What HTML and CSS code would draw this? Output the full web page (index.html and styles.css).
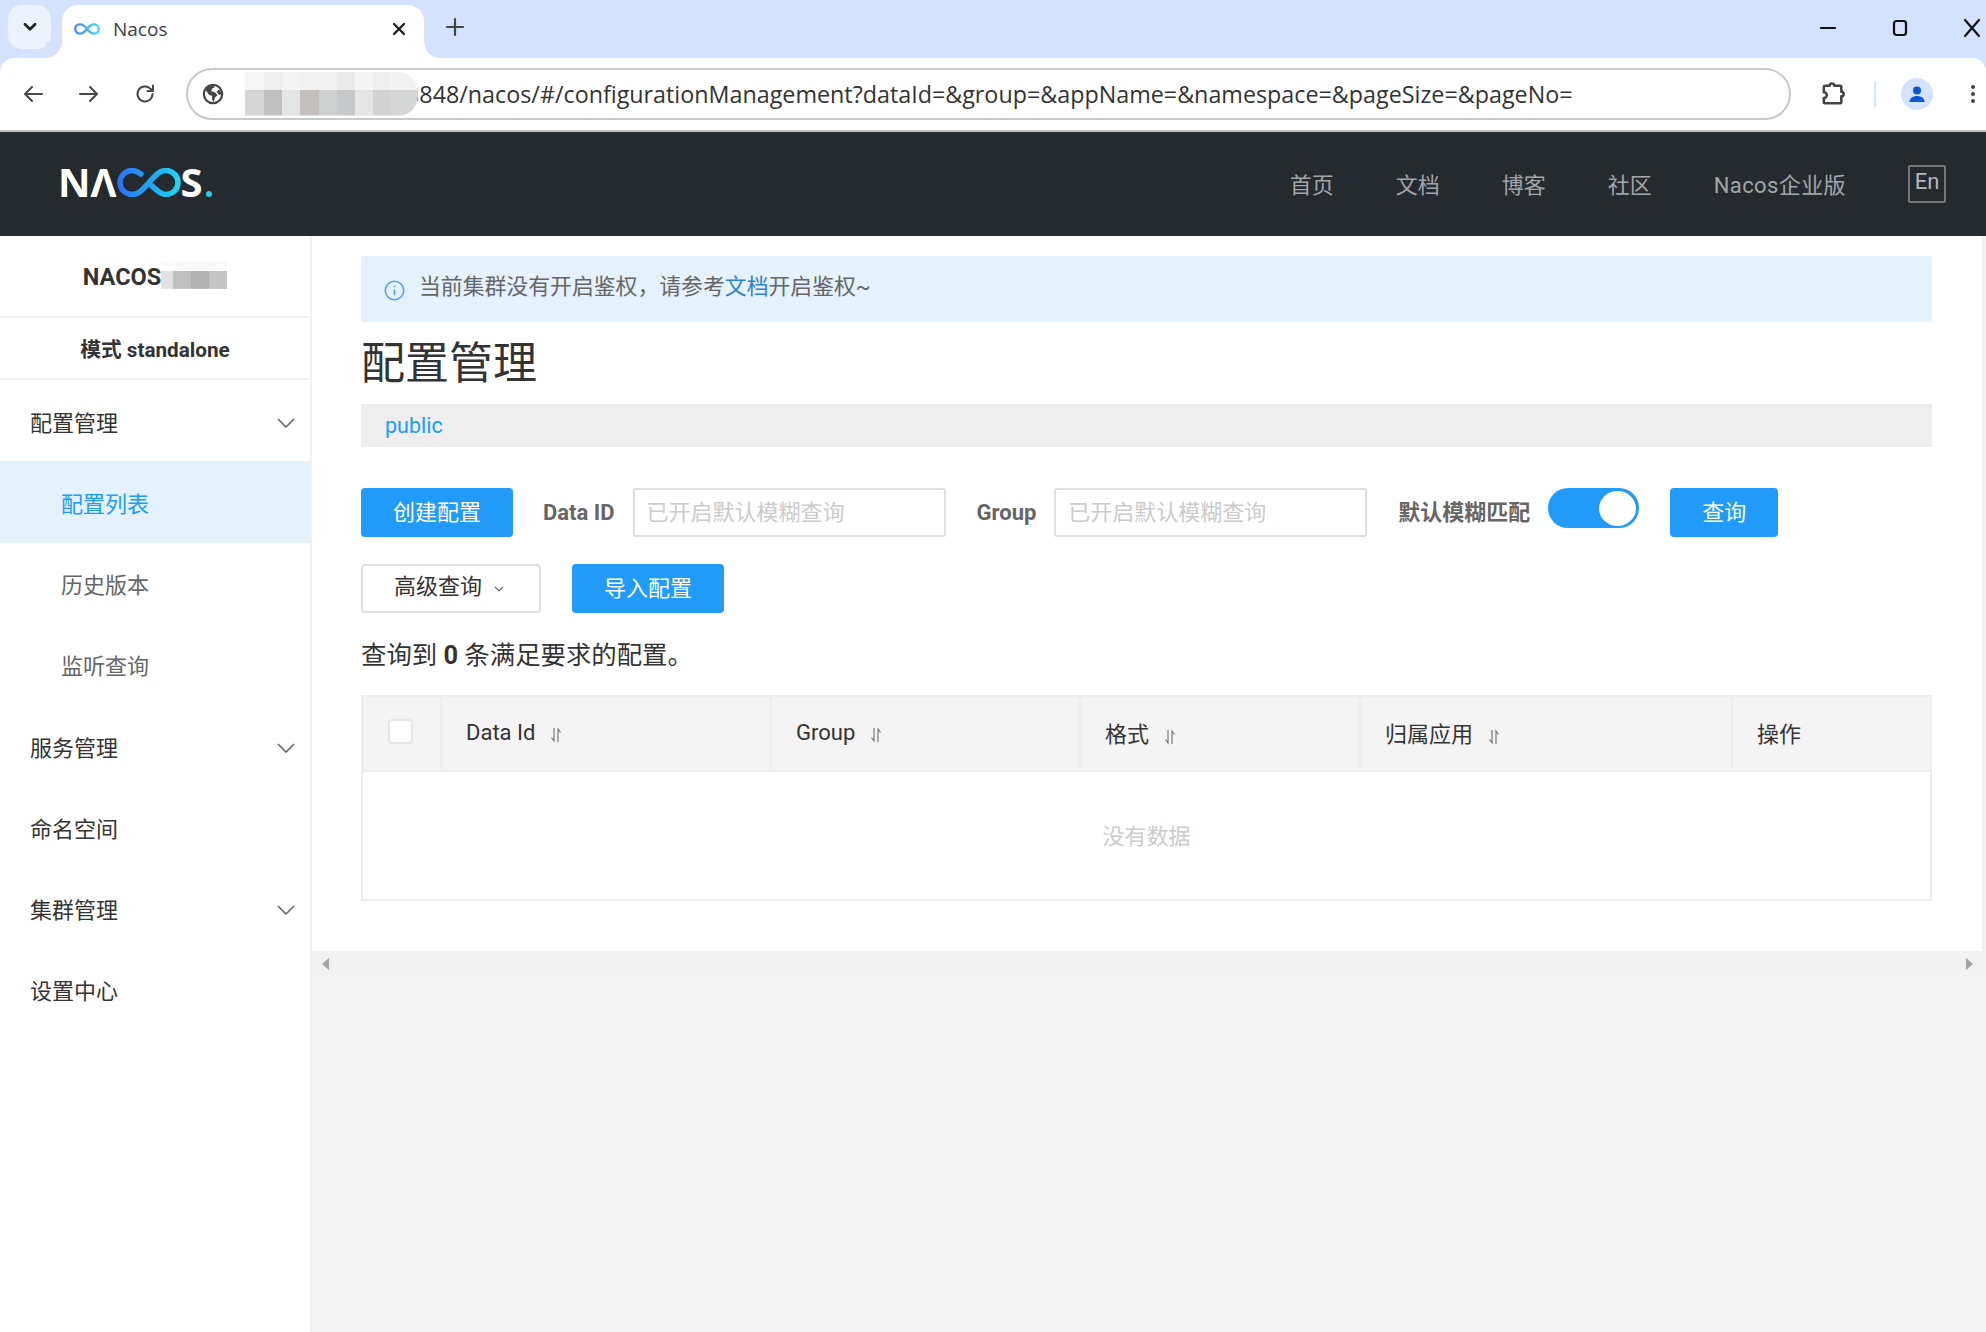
FILE: index.html
```html
<!DOCTYPE html>
<html lang="zh-CN">
<head>
<meta charset="utf-8">
<title>Nacos</title>
<link rel="stylesheet" href="styles.css">
</head>
<body>
<svg class="defs" aria-hidden="true"><defs>
  <linearGradient id="inf" x1="0" x2="1" y1="0" y2="0"><stop offset="0" stop-color="#2a74f5"/><stop offset=".55" stop-color="#1fa8f5"/><stop offset="1" stop-color="#1fd6f2"/></linearGradient>
</defs></svg>

<header class="tabstrip">
  <div class="tablist-btn"><svg class="ic16" viewBox="0 0 16 16"><path d="M3.5 5.5 8 10l4.5-4.5" class="st-dark2"/></svg></div>
  <div class="tab">
    <svg class="favicon" viewBox="0 0 62 30"><path class="inf-stroke-fav" d="M31 15C25 7 20 4 14 4 7 4 3 9 3 15s4 11 11 11c6 0 11-3 17-11s11-11 17-11c7 0 11 5 11 11s-4 11-11 11c-6 0-11-3-17-11z"/></svg>
    <span class="tab-title">Nacos</span>
    <svg class="tab-close" viewBox="0 0 16 16"><path d="M3 3l10 10M13 3 3 13" class="st-dark2"/></svg>
  </div>
  <svg class="tab-plus" viewBox="0 0 24 24"><path d="M12 4v16M4 12h16" class="st-dark"/></svg>
  <div class="win-ctrl">
    <svg class="ic24" viewBox="0 0 24 24"><path d="M5 12h14" class="st-black"/></svg>
    <svg class="ic24" viewBox="0 0 24 24"><rect x="6" y="5" width="12" height="14" rx="2.5" class="st-black"/></svg>
    <svg class="ic24" viewBox="0 0 24 24"><path d="M5 4l14 16M19 4 5 20" class="st-black"/></svg>
  </div>
</header>

<div class="toolbar">
  <svg class="ic24 tb-first" viewBox="0 0 24 24"><path d="M21 12H4M11 5l-7 7 7 7" class="st-gray"/></svg>
  <svg class="ic24 tb-next" viewBox="0 0 24 24"><path d="M3 12h17M13 5l7 7-7 7" class="st-gray"/></svg>
  <svg class="ic24 tb-next" viewBox="0 0 24 24"><path d="M19.5 12a7.5 7.5 0 1 1-2.3-5.4L20 9M20 3.5V9h-5.5" class="st-gray"/></svg>
  <div class="omnibox">
    <svg class="globe" viewBox="0 0 24 24"><circle cx="12" cy="12" r="10" class="globe-ring"/><path class="globe-land" d="M12 3c-4 0-7 2-8 5l4 5 3 1v4l2 3 1-5 3-3-3-3-4-1 1-3 3-1zM18 7l-2 3 3 3 2-1c0-2-1-4-3-5z"/></svg>
    <span class="url">8848/nacos/#/configurationManagement?dataId=&amp;group=&amp;appName=&amp;namespace=&amp;pageSize=&amp;pageNo=</span>
    <div class="url-mosaic" aria-hidden="true"></div>
  </div>
  <svg class="ext" viewBox="0 0 24 24"><path class="st-dark-ext" d="M6 5h4a2 2 0 0 1 4 0h5a1 1 0 0 1 1 1v4a2 2 0 0 1 0 4v5a1 1 0 0 1-1 1H6a1 1 0 0 1-1-1v-3.500a2.500 2.500 0 0 0 0-5V6a1 1 0 0 1 1-1z"/></svg>
  <div class="tb-div"></div>
  <div class="avatar"><svg viewBox="0 0 24 24"><circle cx="12" cy="8.500" r="4"/><path d="M4.500 20c0-4 3.500-6 7.500-6s7.500 2 7.500 6z"/></svg></div>
  <svg class="dots" viewBox="0 0 24 24"><circle cx="12" cy="5" r="2"/><circle cx="12" cy="12" r="2"/><circle cx="12" cy="19" r="2"/></svg>
</div>

<div class="app-header">
  <div class="logo">
    <span class="logo-t">N&#923;</span>
    <svg class="logo-inf" viewBox="0 0 64 29"><path class="inf-stroke" d="M24 6C21 4 18 2.500 15 2.500 8 2.500 3 8 3 14.500S8 26.500 15 26.500C22 26.500 26 21 32 14.500 38 8 42 2.500 49 2.500 56 2.500 61 8 61 14.500S56 26.500 49 26.500C44 26.500 40 23 35 18"/></svg>
    <span class="logo-t">S</span><span class="logo-dot"></span>
  </div>
  <nav class="top-nav">
    <a>首页</a><a>文档</a><a>博客</a><a>社区</a><a class="nav-wide">Nacos企业版</a>
    <span class="lang">En</span>
  </nav>
</div>

<div class="shell">
  <aside class="sidebar">
    <div class="side-brand"><span>NACOS</span><i class="brand-mosaic"></i></div>
    <div class="side-mode">模式 standalone</div>
    <ul class="menu">
      <li class="m-item">配置管理<svg class="chev" viewBox="0 0 18 10"><path d="M1 1l8 8 8-8"/></svg></li>
      <li class="m-item sub active">配置列表</li>
      <li class="m-item sub">历史版本</li>
      <li class="m-item sub">监听查询</li>
      <li class="m-item">服务管理<svg class="chev" viewBox="0 0 18 10"><path d="M1 1l8 8 8-8"/></svg></li>
      <li class="m-item">命名空间</li>
      <li class="m-item">集群管理<svg class="chev" viewBox="0 0 18 10"><path d="M1 1l8 8 8-8"/></svg></li>
      <li class="m-item">设置中心</li>
    </ul>
  </aside>

  <main class="main">
    <div class="pane">
      <div class="content">
        <div class="notice">
          <svg class="notice-ic" viewBox="0 0 20 20"><circle cx="10" cy="10" r="8.800"/><path d="M10 9v5.500M10 5.500v1.500"/></svg>
          <span class="notice-text">当前集群没有开启鉴权，请参考<a class="notice-link">文档</a>开启鉴权~</span>
        </div>
        <h1 class="title">配置管理</h1>
        <div class="ns-bar"><a>public</a></div>

        <div class="form-row">
          <button class="btn primary first">创建配置</button>
          <label class="f-item"><span class="f-label">Data ID</span><span class="f-input">已开启默认模糊查询</span></label>
          <label class="f-item"><span class="f-label">Group</span><span class="f-input">已开启默认模糊查询</span></label>
          <div class="f-item"><span class="f-label">默认模糊匹配</span><span class="switch"><i></i></span></div>
          <button class="btn primary query">查询</button>
        </div>
        <div class="form-row second">
          <button class="btn ghost">高级查询<svg class="mini-chev" viewBox="0 0 10 6"><path d="M1 1l4 4 4-4"/></svg></button>
          <button class="btn primary">导入配置</button>
        </div>

        <p class="count">查询到 <b>0</b> 条满足要求的配置。</p>

        <table class="grid">
          <colgroup><col class="c0"><col class="c1"><col class="c2"><col class="c3"><col class="c4"><col class="c5"></colgroup>
          <thead>
            <tr>
              <th class="chk-cell"><span class="chk"></span></th>
              <th>Data Id<svg class="sort" viewBox="0 0 12 16"><path d="M4 1v13L1.500 10.500M8 15V2l2.500 3.500"/></svg></th>
              <th>Group<svg class="sort" viewBox="0 0 12 16"><path d="M4 1v13L1.500 10.500M8 15V2l2.500 3.500"/></svg></th>
              <th>格式<svg class="sort" viewBox="0 0 12 16"><path d="M4 1v13L1.500 10.500M8 15V2l2.500 3.500"/></svg></th>
              <th>归属应用<svg class="sort" viewBox="0 0 12 16"><path d="M4 1v13L1.500 10.500M8 15V2l2.500 3.500"/></svg></th>
              <th>操作</th>
            </tr>
          </thead>
          <tbody><tr><td colspan="6" class="empty">没有数据</td></tr></tbody>
        </table>
      </div>
      <div class="vbar"></div>
    </div>
    <div class="hbar"><i class="arr-l"></i><i class="arr-r"></i></div>
  </main>
</div>
</body>
</html>
```
FILE: styles.css
```css
* { box-sizing: border-box; }
html, body { margin: 0; padding: 0; height: 100%; overflow: hidden; }
body { width: 1986px; height: 1332px; display: flex; flex-direction: column; background: #d3e3fd; font-family: Roboto, "Noto Sans CJK SC", sans-serif; font-size: 22px; color: #333; }
.defs { position: absolute; width: 0; height: 0; }
button { font: inherit; }

/* browser chrome */
.tabstrip { height: 58px; flex: none; background: #d3e3fd; display: flex; align-items: flex-start; padding: 5px 2px 0 8px; }
.tablist-btn { width: 43px; height: 44px; border-radius: 14px; background: #ecf2fe; display: flex; align-items: center; justify-content: center; }
.ic16 { width: 18px; height: 18px; }
.ic24 { width: 24px; height: 24px; flex: none; }
.tab { position: relative; margin-left: 11px; width: 362px; height: 53px; background: #fff; border-radius: 16px 16px 0 0; display: flex; align-items: center; padding: 0 17px 6px 12px; }
.tab::before, .tab::after { content: ""; position: absolute; bottom: 0; width: 16px; height: 16px; }
.tab::before { left: -16px; background: radial-gradient(circle at 0 0, #d3e3fd 15.500px, #fff 16px); }
.tab::after { right: -16px; background: radial-gradient(circle at 100% 0, #d3e3fd 15.500px, #fff 16px); }
.favicon { width: 26px; height: 14px; opacity: .85; }
.tab-title { margin-left: 13px; font-family: "Open Sans", "Noto Sans", sans-serif; font-size: 19px; color: #3c4043; }
.tab-close { width: 16px; height: 16px; margin-left: auto; }
.tab-plus { width: 24px; height: 24px; margin: 10px 0 0 19px; }
.win-ctrl { margin-left: auto; display: flex; gap: 48px; margin-top: 11px; }
.st-dark, .st-dark2, .st-black, .st-gray, .st-dark-ext { fill: none; stroke-linecap: round; stroke-linejoin: round; }
.st-dark { stroke: #444; stroke-width: 2.2; }
.st-dark2 { stroke: #222; stroke-width: 2.4; }
.st-black { stroke: #111; stroke-width: 2.2; }
.st-gray { stroke: #474747; stroke-width: 2; }
.st-dark-ext { stroke: #444; stroke-width: 2.2; }

.toolbar { height: 74px; flex: none; background: #fff; border-bottom: 2px solid #bdbdbd; display: flex; align-items: center; padding-left: 21px; border-radius: 14px 14px 0 0; position: relative; }
.tb-next { margin-left: 32px; }
.omnibox { position: relative; margin-left: 29px; width: 1605px; height: 52px; border: 2px solid #c8c9c9; border-radius: 26px; background: #fff; display: flex; align-items: center; padding-left: 14px; flex: none; }
.globe { width: 22px; height: 22px; flex: none; }
.globe-ring { fill: #fff; stroke: #444; stroke-width: 2.4; }
.globe-land { fill: #444; }
.url { margin-left: 182px; white-space: nowrap; font-family: "Open Sans", "Noto Sans", sans-serif; font-size: 23.300px; color: #333; }
.url-mosaic { position: absolute; left: 57px; top: 2px; width: 173px; height: 44px; border-radius: 0 20px 20px 0;
  background:
    linear-gradient(to right, #d6d6d6 0 19px, #c0c0c0 19px 37px, #e4e5e5 37px 55px, #c2bfbc 55px 74px, #cdcfd0 74px 92px, #c6c8ca 92px 110px, #e5e5e3 110px 128px, #d1d2d1 128px 146px, #d6d8d8 146px 173px) 0 100% / 100% 58% no-repeat,
    linear-gradient(to right, #f6f6f6 0 19px, #eee 19px 37px, #f4f4f4 37px 55px, #f2f2f2 55px 74px, #f0f0f0 74px 92px, #eaeaea 92px 110px, #f5f5f5 110px 128px, #eee 128px 146px, #f2f2f2 146px 173px) 0 0 / 100% 42% no-repeat; }
.ext { width: 28px; height: 28px; margin-left: 27px; flex: none; }
.tb-div { width: 2px; height: 26px; background: #d3e3fd; margin-left: 28px; flex: none; }
.avatar { width: 32px; height: 32px; border-radius: 50%; background: #d3e3fd; margin-left: 25px; flex: none; display: flex; align-items: center; justify-content: center; }
.avatar svg { width: 24px; height: 24px; fill: #0b57d0; }
.dots { width: 24px; height: 24px; margin-left: 28px; flex: none; fill: #444; }

/* app header */
.app-header { height: 104px; flex: none; background: #252a2e; display: flex; align-items: center; justify-content: space-between; padding: 0 40px 0 58px; }
.logo { display: flex; align-items: center; height: 40px; color: #fff; font-family: "Open Sans", sans-serif; font-weight: 700; margin-top: -4px; }
.logo-t { font-size: 40px; line-height: 40px; }
.logo-inf { width: 64px; height: 29px; flex: none; }
.inf-stroke { fill: none; stroke: url(#inf); stroke-width: 5.500; stroke-linecap: round; }
.inf-stroke-fav { fill: none; stroke: url(#inf); stroke-width: 5.500; }
.logo-dot { width: 6px; height: 6px; border-radius: 50%; background: #1fd0e6; margin: 24px 0 0 3px; }
.top-nav { display: flex; align-items: center; gap: 62px; color: #a3a6a8; font-size: 22px; }
.top-nav a { padding-bottom: 3px; }
.nav-wide { letter-spacing: .4px; }
.lang { width: 38px; height: 38px; border: 2px solid #777; border-radius: 2px; display: flex; align-items: flex-start; justify-content: center; line-height: 30px; color: #b5b7b9; }

/* shell */
.shell { flex: 1; display: flex; min-height: 0; background: #fff; }
.sidebar { width: 312px; flex: none; background: #fff; border-right: 2px solid #f2f2f2; }
.side-brand { height: 82px; padding-top: 2px; border-bottom: 2px solid #f2f2f2; display: flex; align-items: center; justify-content: center; font-weight: 700; font-size: 23.500px; color: #333; }
.brand-mosaic { display: block; width: 66px; height: 28px; margin-top: -4px;
  background: linear-gradient(to right, #e2e2e2 0 12px, #c0c0c0 12px 30px, #b0b0b0 30px 48px, #c6c6c6 48px 66px) 0 100% / 100% 64% no-repeat, #fafafa; }
.side-mode { height: 62px; border-bottom: 2px solid #f2f2f2; display: flex; align-items: center; justify-content: center; font-weight: 700; font-size: 20.700px; color: #333; }
.menu { list-style: none; margin: 0; padding: 0; }
.m-item { height: 81.250px; display: flex; align-items: center; justify-content: space-between; padding: 0 15px 0 30px; color: #333; }
.m-item.sub { padding-left: 61px; color: #666; }
.m-item.active { background: #e3f2fd; color: #209bfa; }
.chev { width: 18px; height: 10px; margin-top: 4px; fill: none; stroke: #666; stroke-width: 1.600; }

/* main */
.main { flex: 1; min-width: 0; background: #f4f4f4; display: flex; flex-direction: column; }
.pane { display: flex; height: 715px; background: #fff; flex: none; }
.content { flex: 1; padding: 20px 50px 0 49px; min-width: 0; }
.vbar { width: 4px; flex: none; background: #f1f1f1; }
.notice { height: 66px; background: #e3f2fd; border-radius: 3px; display: flex; align-items: center; padding-left: 23px; color: #666; font-size: 21.850px; }
.notice-ic { width: 21px; height: 21px; margin: 3px 14px 0 0; fill: none; stroke: #5b9df5; stroke-width: 1.500; }
.notice-text { padding-bottom: 9px; }
.notice-link { color: #2f80cf; }
.title { height: 82px; margin: 0; font-size: 44px; font-weight: 400; line-height: 85px; color: #333; }
.ns-bar { height: 43px; background: #eee; padding-left: 24px; line-height: 43px; font-size: 21.500px; }
.ns-bar a { color: #209bfa; }
.form-row { display: flex; align-items: flex-start; margin-top: 41px; height: 49px; }
.form-row.second { margin-top: 27px; gap: 31px; }
.btn { height: 49px; border-radius: 4px; border: 0; padding: 0 0 5px; text-align: center; font-size: 22px; width: 152px; }
.primary { background: #209bfa; color: #fff; }
.ghost { width: 180px; background: #fff; border: 2px solid #e0e0e0; color: #333; text-align: left; padding: 0 0 9px 31px; display: flex; align-items: center; }
.mini-chev { width: 10px; height: 6px; margin: 9px 0 0 12px; fill: none; stroke: #666; stroke-width: 1.200; }
.first { margin-right: 30px; }
.query { width: 108px; }
.f-item { display: flex; align-items: flex-start; gap: 18px; margin-right: 31px; }
.f-label { line-height: 49px; font-weight: 700; color: #666; white-space: nowrap; }
.f-input { width: 313px; height: 49px; border: 2px solid #e0e0e0; border-radius: 3px; padding-left: 12px; line-height: 45px; color: #ccc; font-weight: 400; }
.switch { display: flex; justify-content: flex-end; align-items: center; width: 91px; height: 40px; border-radius: 20px; background: #209bfa; padding-right: 3px; }
.switch i { display: block; width: 37px; height: 35px; border-radius: 50%; background: #fff; }
.count { margin: 25px 0 23px; line-height: 34px; height: 34px; color: #333; font-size: 25.400px; white-space: nowrap; }
.count b { font-weight: 700; }
.grid { width: 100%; table-layout: fixed; border-collapse: collapse; border: 2px solid #eee; }
.c0 { width: 79px; } .c1 { width: 330px; } .c2 { width: 309px; } .c3 { width: 280px; } .c4 { width: 372px; }
.grid th { height: 75px; background: #f4f4f4; border-right: 2px solid #eee; border-bottom: 2px solid #eee; padding: 0 0 3px 24px; text-align: left; font-weight: 400; color: #333; white-space: nowrap; }
.grid th:last-child { border-right: 0; }
.grid th.chk-cell { padding-left: 25px; }
.chk { display: block; width: 25px; height: 25px; background: #fff; border: 2px solid #e6e6e6; border-radius: 4px; margin-top: -2px; }
.sort { width: 12px; height: 16px; margin-left: 15px; vertical-align: -3px; fill: none; stroke: #777; stroke-width: 1.200; }
.empty { height: 129px; text-align: center; color: #ccc; padding-bottom: 5px; }
.hbar { height: 26px; flex: none; background: #f1f1f1; display: flex; align-items: center; justify-content: space-between; padding: 0 13px 0 10px; }
.arr-l { width: 0; height: 0; border: 6px solid transparent; border-left: 0; border-right: 7px solid #a3a3a3; }
.arr-r { width: 0; height: 0; border: 6px solid transparent; border-right: 0; border-left: 7px solid #a3a3a3; }
```
